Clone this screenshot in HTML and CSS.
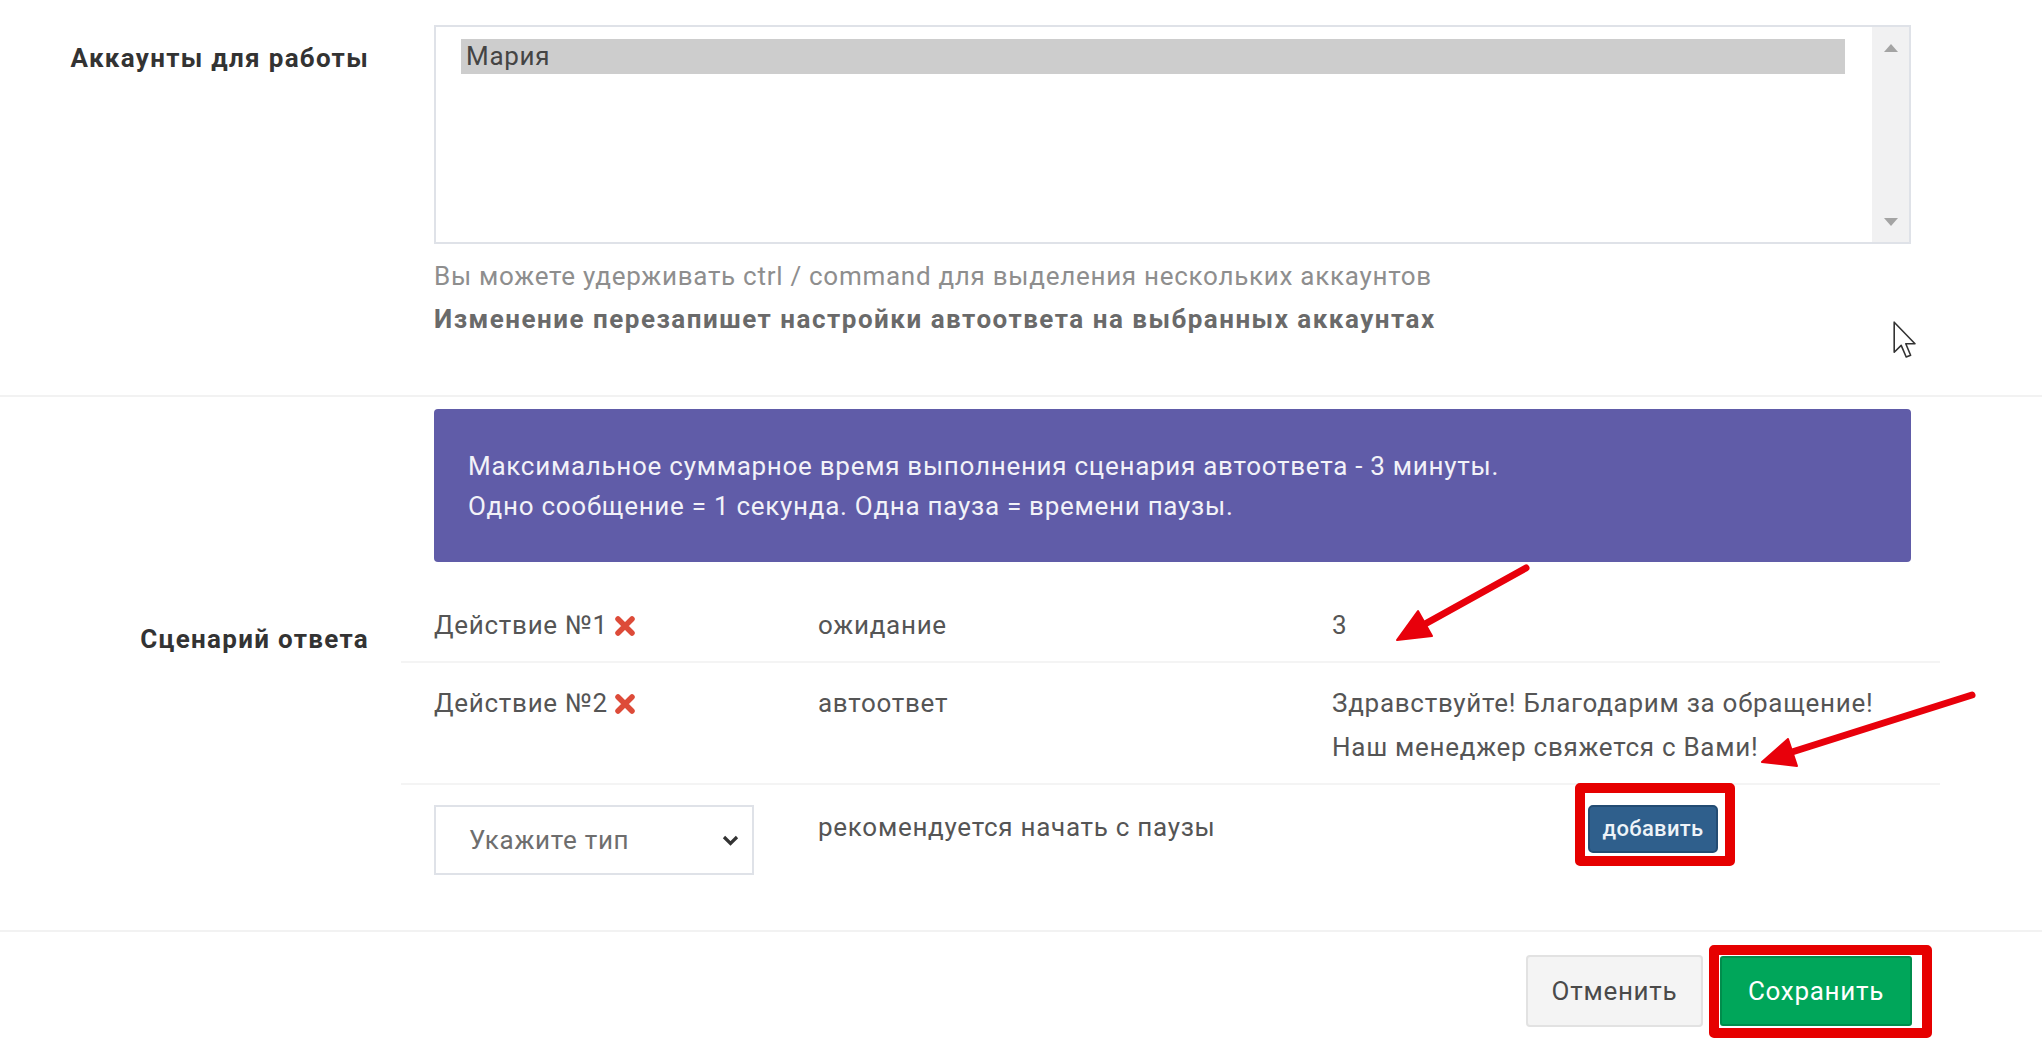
FILE: index.html
```html
<!DOCTYPE html>
<html lang="ru">
<head>
<meta charset="utf-8">
<title>Автоответ</title>
<link rel="stylesheet" href="styles.css">
</head>
<body>
<div class="page">
  <section class="form-row accounts">
    <div class="form-label">Аккаунты для работы</div>
    <div class="control">
      <div class="listbox">
        <div class="options">
          <div class="option selected">Мария</div>
        </div>
        <div class="scrollbar">
          <svg class="sb-arrow" width="14" height="8" viewBox="0 0 14 8"><path d="M7 0 L14 8 L0 8 Z" fill="#a4a4a4"/></svg>
          <svg class="sb-arrow" width="14" height="8" viewBox="0 0 14 8"><path d="M0 0 L14 0 L7 8 Z" fill="#a4a4a4"/></svg>
        </div>
      </div>
      <p class="help">Вы можете удерживать ctrl / command для выделения нескольких аккаунтов</p>
      <p class="note">Изменение перезапишет настройки автоответа на выбранных аккаунтах</p>
    </div>
  </section>

  <section class="form-row scenario">
    <div class="form-label">Сценарий ответа</div>
    <div class="control">
      <div class="alert">
        <p>Максимальное суммарное время выполнения сценария автоответа - 3 минуты.</p>
        <p>Одно сообщение = 1 секунда. Одна пауза = времени паузы.</p>
      </div>
      <div class="steps">
        <div class="step">
          <div class="cell">Действие №1<svg class="del" width="20" height="20" viewBox="0 0 20 20"><path d="M3 3 L17 17 M17 3 L3 17" stroke="#dd4b39" stroke-width="5.5" stroke-linecap="round"/></svg></div>
          <div class="cell">ожидание</div>
          <div class="cell">3</div>
        </div>
        <div class="step">
          <div class="cell">Действие №2<svg class="del" width="20" height="20" viewBox="0 0 20 20"><path d="M3 3 L17 17 M17 3 L3 17" stroke="#dd4b39" stroke-width="5.5" stroke-linecap="round"/></svg></div>
          <div class="cell">автоответ</div>
          <div class="cell">Здравствуйте! Благодарим за обращение!<br>Наш менеджер свяжется с Вами!</div>
        </div>
        <div class="step step-add">
          <div class="cell">
            <div class="select">
              <span>Укажите тип</span>
              <svg width="17" height="11" viewBox="0 0 17 11"><path d="M2 2 L8.5 8.5 L15 2" fill="none" stroke="#333" stroke-width="3.2"/></svg>
            </div>
          </div>
          <div class="cell">рекомендуется начать с паузы</div>
          <div class="cell add-cell">
            <span class="annot annot-add"><button class="btn btn-add" type="button">добавить</button></span>
          </div>
        </div>
      </div>
    </div>
  </section>

  <footer class="footer">
    <button class="btn btn-cancel" type="button">Отменить</button>
    <span class="annot annot-save"><button class="btn btn-save" type="button">Сохранить</button></span>
  </footer>

  <svg class="overlay" width="2042" height="1046" viewBox="0 0 2042 1046">
    <g stroke="#e8000b" stroke-width="7" stroke-linecap="round" fill="#e8000b">
      <line x1="1526" y1="568" x2="1425" y2="624"/>
      <path d="M1397 640 L1432 636 L1418 611 Z" stroke-width="2" stroke-linejoin="round"/>
      <line x1="1972" y1="695" x2="1792" y2="752"/>
      <path d="M1762 762 L1797 766 L1788 739 Z" stroke-width="2" stroke-linejoin="round"/>
    </g>
  </svg>

  <svg class="cursor" width="24" height="38" viewBox="0 0 12 19">
    <path d="M0.6 0.6 L0.6 15.6 L4.1 12.2 L6.6 18 L8.8 17.1 L6.4 11.4 L11 11.4 Z" fill="#fff" stroke="#333" stroke-width="0.8" stroke-linejoin="round"/>
  </svg>
</div>
</body>
</html>
```

FILE: styles.css
```css
* { box-sizing: border-box; }

html, body {
  margin: 0;
  padding: 0;
  background: #fff;
}

body {
  font-family: Roboto, "Noto Sans", "DejaVu Sans", sans-serif;
  font-size: 26px;
  letter-spacing: 0.72px;
  color: #555;
}

.page {
  position: relative;
  width: 2042px;
  height: 1046px;
  overflow: hidden;
}

.form-row {
  display: flex;
}

.form-label {
  width: 434px;
  flex: none;
  padding-right: 65px;
  text-align: right;
  font-weight: 700;
  letter-spacing: 1.3px;
  color: #333;
  line-height: 34px;
}

.control {
  width: 1477px;
  flex: none;
}

/* accounts */
.accounts {
  padding-top: 25px;
  padding-bottom: 59px;
  border-bottom: 2px solid #f2f2f2;
}

.accounts .form-label {
  padding-top: 16px;
}

.listbox {
  display: flex;
  height: 219px;
  border: 2px solid #dfe2e8;
}

.options {
  flex: 1;
  padding: 12px 27px 0 25px;
}

.option {
  height: 35px;
  line-height: 35px;
  padding-left: 5px;
  color: #444;
}

.option.selected {
  background: #cdcdcd;
}

.scrollbar {
  width: 37px;
  flex: none;
  background: #f1f1f2;
  display: flex;
  flex-direction: column;
  justify-content: space-between;
  align-items: center;
  padding: 17px 0 16px;
}

.sb-arrow { display: block; }

.help {
  margin: 15px 0 0;
  line-height: 34px;
  color: #8e8e8e;
}

.note {
  margin: 9px 0 0;
  line-height: 34px;
  color: #6a6a6a;
  font-weight: 700;
  letter-spacing: 1.5px;
}

/* scenario */
.scenario {
  padding-top: 12px;
  padding-bottom: 55px;
  border-bottom: 2px solid #f2f2f2;
}

.scenario .form-label {
  padding-top: 213px;
}

.alert {
  background: #605ca8;
  color: #f2f2f8;
  border-radius: 4px;
  padding: 37px 34px 36px;
  line-height: 40px;
}

.alert p { margin: 0; }

.steps {
  margin: 23px -29px 0 -33px;
}

.step {
  display: grid;
  grid-template-columns: 384px 514px 1fr;
  border-bottom: 2px solid #f4f4f4;
}

.cell {
  padding: 18px 33px 14px;
  line-height: 44px;
  color: #555;
}

.del {
  margin-left: 7px;
  vertical-align: -2px;
}

.step-add {
  border-bottom: none;
}

.step-add .cell {
  padding: 20px 33px 0;
}

.select {
  width: 320px;
  height: 70px;
  border: 2px solid #dfe2e8;
  display: flex;
  align-items: center;
  justify-content: space-between;
  padding: 0 13px 0 33px;
  color: #6e6e6e;
  line-height: 34px;
}

.select svg { display: block; }

.add-cell {
  padding-left: 289px !important;
}

/* buttons */
.btn {
  font-family: inherit;
  font-size: 26px;
  letter-spacing: 0.72px;
  margin: 0;
  cursor: pointer;
}

.btn-add {
  width: 130px;
  height: 48px;
  background: #2f5f8c;
  border: 2px solid #234c73;
  border-radius: 5px;
  color: #eef3f8;
  font-size: 22px;
  font-weight: 500;
  letter-spacing: 0.3px;
  padding: 0;
  display: block;
}

.annot {
  position: relative;
  display: inline-block;
}

.annot::after {
  content: "";
  position: absolute;
  border: 10px solid #e60000;
  border-radius: 5px;
  pointer-events: none;
}

.annot-add {
  margin-top: -1px;
}

.annot-add::after {
  inset: -22px -17px -13px -13px;
}

.footer {
  display: flex;
  justify-content: flex-end;
  align-items: center;
  gap: 17px;
  padding: 23px 130px 0 0;
}

.btn-cancel {
  width: 177px;
  height: 72px;
  background: #f4f4f4;
  border: 2px solid #e2e2e2;
  border-radius: 4px;
  color: #4a4a4a;
}

.btn-save {
  display: block;
  width: 192px;
  height: 70px;
  background: #00a65a;
  border: 2px solid #008d4c;
  border-radius: 3px;
  color: #fff;
}

.annot-save::after {
  inset: -11px -20px -12px -11px;
}

.overlay {
  position: absolute;
  left: 0;
  top: 0;
  pointer-events: none;
}

.cursor {
  position: absolute;
  left: 1893px;
  top: 321px;
  pointer-events: none;
}
```
